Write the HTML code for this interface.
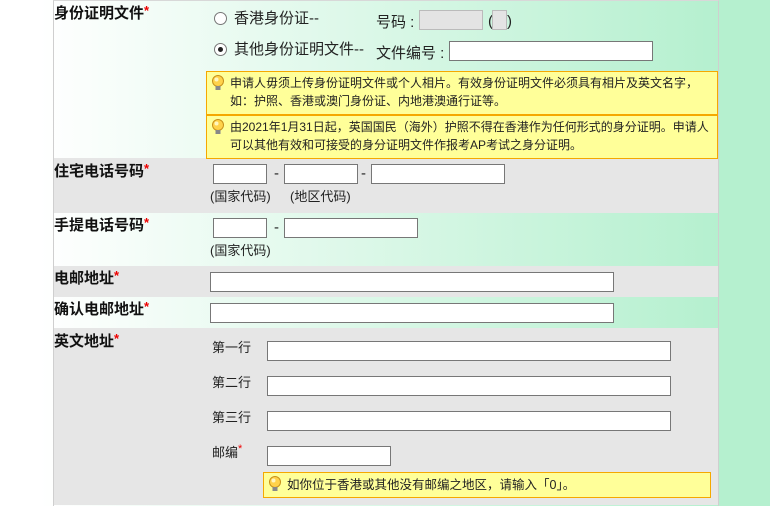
<!DOCTYPE html>
<html><head><meta charset="utf-8"><style>
*{margin:0;padding:0;box-sizing:border-box}
html,body{width:770px;height:506px;overflow:hidden}
body{background:linear-gradient(to right,#ffffff 0px,#ffffff 40px,#b5f0cf 718px,#b5f0cf 770px);font-family:"Liberation Sans","Noto Sans CJK SC",sans-serif;color:#222;position:relative}
.a{position:absolute;white-space:nowrap}
.c{position:absolute;left:53px;top:0;width:666px;height:506px;border-left:1px solid #cfcfcf;border-right:1px solid #cfcfcf;border-top:1px solid #d8d8d8}
.g{position:absolute;left:54px;width:664px;background:#e6e6e6}
.lb{position:absolute;left:54px;font-size:15px;font-weight:bold;color:#111;line-height:18px}
.lb i{color:#e00;font-style:normal;font-size:13px;vertical-align:top;position:relative;top:-3px}
.in{position:absolute;background:#fff;border:1px solid #777;height:20px}
.t{font-size:15px;line-height:16px}
.s{font-size:13px;line-height:16px}
.tip{position:absolute;background:#ffff99;border:1px solid #f5a800;font-size:12px;line-height:18px;color:#222;padding:2px 0 0 23px}
.tip svg{position:absolute;left:4px;top:3px}
.rad{position:absolute;width:13px;height:13px;border:1px solid #777;border-radius:50%;background:#fff}
.rad.on::after{content:"";position:absolute;left:3px;top:3px;width:5px;height:5px;border-radius:50%;background:#222}
</style></head><body>
<div class="c"></div>
<div class="g" style="top:158px;height:55px"></div>
<div class="g" style="top:266px;height:31px"></div>
<div class="g" style="top:328px;height:177px"></div>

<div class="lb" style="top:5px">身份证明文件<i>*</i></div>
<div class="rad" style="left:214px;top:12px"></div>
<div class="a t" style="left:234px;top:11px">香港身份证--</div>
<div class="a t" style="left:376px;top:15px">号码 :</div>
<div class="in" style="left:419px;top:10px;width:64px;background:#e4e4e4;border-color:#bbb"></div>
<div class="a t" style="left:488px;top:14px">(</div>
<div class="in" style="left:492px;top:10px;width:15px;background:#e4e4e4;border-color:#bbb"></div>
<div class="a t" style="left:507px;top:14px">)</div>
<div class="rad on" style="left:214px;top:43px"></div>
<div class="a t" style="left:234px;top:42px">其他身份证明文件--</div>
<div class="a t" style="left:376px;top:46px">文件编号 :</div>
<div class="in" style="left:449px;top:41px;width:204px"></div>

<div class="tip" style="left:206px;top:71px;width:512px;height:44px">申请人毋须上传身份证明文件或个人相片。有效身份证明文件必须具有相片及英文名字，<br>如：护照、香港或澳门身份证、内地港澳通行证等。<svg width="14" height="16" viewBox="0 0 14 16"><circle cx="7" cy="6" r="5.5" fill="#ffd24a" stroke="#c8901a"/><circle cx="5.5" cy="4.5" r="2" fill="#fff6c0"/><rect x="4.5" y="11" width="5" height="4" fill="#888"/></svg></div>
<div class="tip" style="left:206px;top:115px;width:512px;height:44px">由2021年1月31日起，英国国民（海外）护照不得在香港作为任何形式的身分证明。申请人<br>可以其他有效和可接受的身分证明文件作报考AP考试之身分证明。<svg width="14" height="16" viewBox="0 0 14 16"><circle cx="7" cy="6" r="5.5" fill="#ffd24a" stroke="#c8901a"/><circle cx="5.5" cy="4.5" r="2" fill="#fff6c0"/><rect x="4.5" y="11" width="5" height="4" fill="#888"/></svg></div>

<div class="lb" style="top:163px">住宅电话号码<i>*</i></div>
<div class="in" style="left:213px;top:164px;width:54px"></div>
<div class="a t" style="left:274px;top:166px">-</div>
<div class="in" style="left:284px;top:164px;width:74px"></div>
<div class="a t" style="left:361px;top:166px">-</div>
<div class="in" style="left:371px;top:164px;width:134px"></div>
<div class="a s" style="left:210px;top:189px">(国家代码)</div>
<div class="a s" style="left:290px;top:189px">(地区代码)</div>

<div class="lb" style="top:217px">手提电话号码<i>*</i></div>
<div class="in" style="left:213px;top:218px;width:54px"></div>
<div class="a t" style="left:274px;top:220px">-</div>
<div class="in" style="left:284px;top:218px;width:134px"></div>
<div class="a s" style="left:210px;top:243px">(国家代码)</div>

<div class="lb" style="top:270px">电邮地址<i>*</i></div>
<div class="in" style="left:210px;top:272px;width:404px"></div>
<div class="lb" style="top:301px">确认电邮地址<i>*</i></div>
<div class="in" style="left:210px;top:303px;width:404px"></div>

<div class="lb" style="top:333px">英文地址<i>*</i></div>
<div class="a s" style="left:212px;top:340px">第一行</div>
<div class="in" style="left:267px;top:341px;width:404px"></div>
<div class="a s" style="left:212px;top:375px">第二行</div>
<div class="in" style="left:267px;top:376px;width:404px"></div>
<div class="a s" style="left:212px;top:410px">第三行</div>
<div class="in" style="left:267px;top:411px;width:404px"></div>
<div class="a s" style="left:212px;top:445px">邮编<span style="color:#e00;font-size:11px;vertical-align:top;position:relative;top:-4px">*</span></div>
<div class="in" style="left:267px;top:446px;width:124px"></div>
<div class="tip" style="left:263px;top:472px;width:448px;height:26px;font-size:12.5px;padding-top:3px">如你位于香港或其他没有邮编之地区，请输入「0」。<svg width="14" height="16" viewBox="0 0 14 16"><circle cx="7" cy="6" r="5.5" fill="#ffd24a" stroke="#c8901a"/><circle cx="5.5" cy="4.5" r="2" fill="#fff6c0"/><rect x="4.5" y="11" width="5" height="4" fill="#888"/></svg></div>
</body></html>
